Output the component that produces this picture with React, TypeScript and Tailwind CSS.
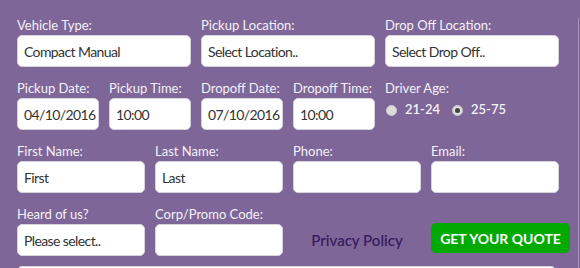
const font = { fontFamily: "Lato, 'Open Sans', sans-serif" };

function Field({ label, value, span = "" }: { label: string; value?: string; span?: string }) {
  return (
    <div className={span}>
      <div className="h-4 mb-[2px] text-[13px] leading-4 text-[#f4f1f8] whitespace-nowrap">{label}</div>
      <div className="h-[32px] bg-white border border-[#d6d3da] rounded-[5px] px-[6px] flex items-center text-[14px] text-[#333] tracking-[-0.6px] whitespace-nowrap overflow-hidden">
        {value}
      </div>
    </div>
  );
}

function Radio({ label, checked }: { label: string; checked?: boolean }) {
  return (
    <div className="flex items-center gap-[8px]">
      <span className="w-[11px] h-[11px] rounded-full bg-[#dcdcdc] border border-[#c9c9c9] flex items-center justify-center">
        {checked && <span className="w-[5px] h-[5px] rounded-full bg-[#444]" />}
      </span>
      <span className="text-[13px] font-semibold text-[#f4f1f8]">{label}</span>
    </div>
  );
}

export default function App() {
  return (
    <div className="w-[580px] h-[268px] overflow-hidden bg-[#7e6699] flex" style={font}>
      <div className="w-[578px] pl-[17px] pt-[17px]">
        <div className="w-[542px] flex flex-col gap-[13px]">
          <div className="grid grid-cols-3 gap-x-[10px]">
            <Field label="Vehicle Type:" value="Compact Manual" />
            <Field label="Pickup Location:" value="Select Location.." />
            <Field label="Drop Off Location:" value="Select Drop Off.." />
          </div>

          <div className="grid grid-cols-6 gap-x-[10px]">
            <Field label="Pickup Date:" value="04/10/2016" />
            <Field label="Pickup Time:" value="10:00" />
            <Field label="Dropoff Date:" value="07/10/2016" />
            <Field label="Dropoff Time:" value="10:00" />
            <div className="col-span-2">
              <div className="h-4 mb-[2px] text-[13px] leading-4 text-[#f4f1f8]">Driver Age:</div>
              <div className="h-[24px] flex items-center gap-[12px] pl-[1px]">
                <Radio label="21-24" />
                <Radio label="25-75" checked />
              </div>
            </div>
          </div>

          <div className="grid grid-cols-4 gap-x-[10px]">
            <Field label="First Name:" value="First" />
            <Field label="Last Name:" value="Last" />
            <Field label="Phone:" />
            <Field label="Email:" />
          </div>

          <div className="grid grid-cols-4 gap-x-[10px]">
            <Field label="Heard of us?" value="Please select.." />
            <Field label="Corp/Promo Code:" />
            <div className="flex items-end justify-center">
              <div className="h-[32px] flex items-center text-[15px] font-semibold text-[#3a1d5e]">Privacy Policy</div>
            </div>
            <div className="flex items-end">
              <button className="shrink-0 h-[30px] w-[139px] mb-[3px] rounded-[5px] bg-[#00aa00] text-white text-[14px] font-bold">
                GET YOUR QUOTE
              </button>
            </div>
          </div>

          <div className="w-[539px] h-[30px] -mt-[3px] bg-white border border-[#d6d3da] rounded-[5px]" />
        </div>
      </div>
      <div className="mt-[18px] w-[2px] border-l border-[#a593b8]" />
    </div>
  );
}
